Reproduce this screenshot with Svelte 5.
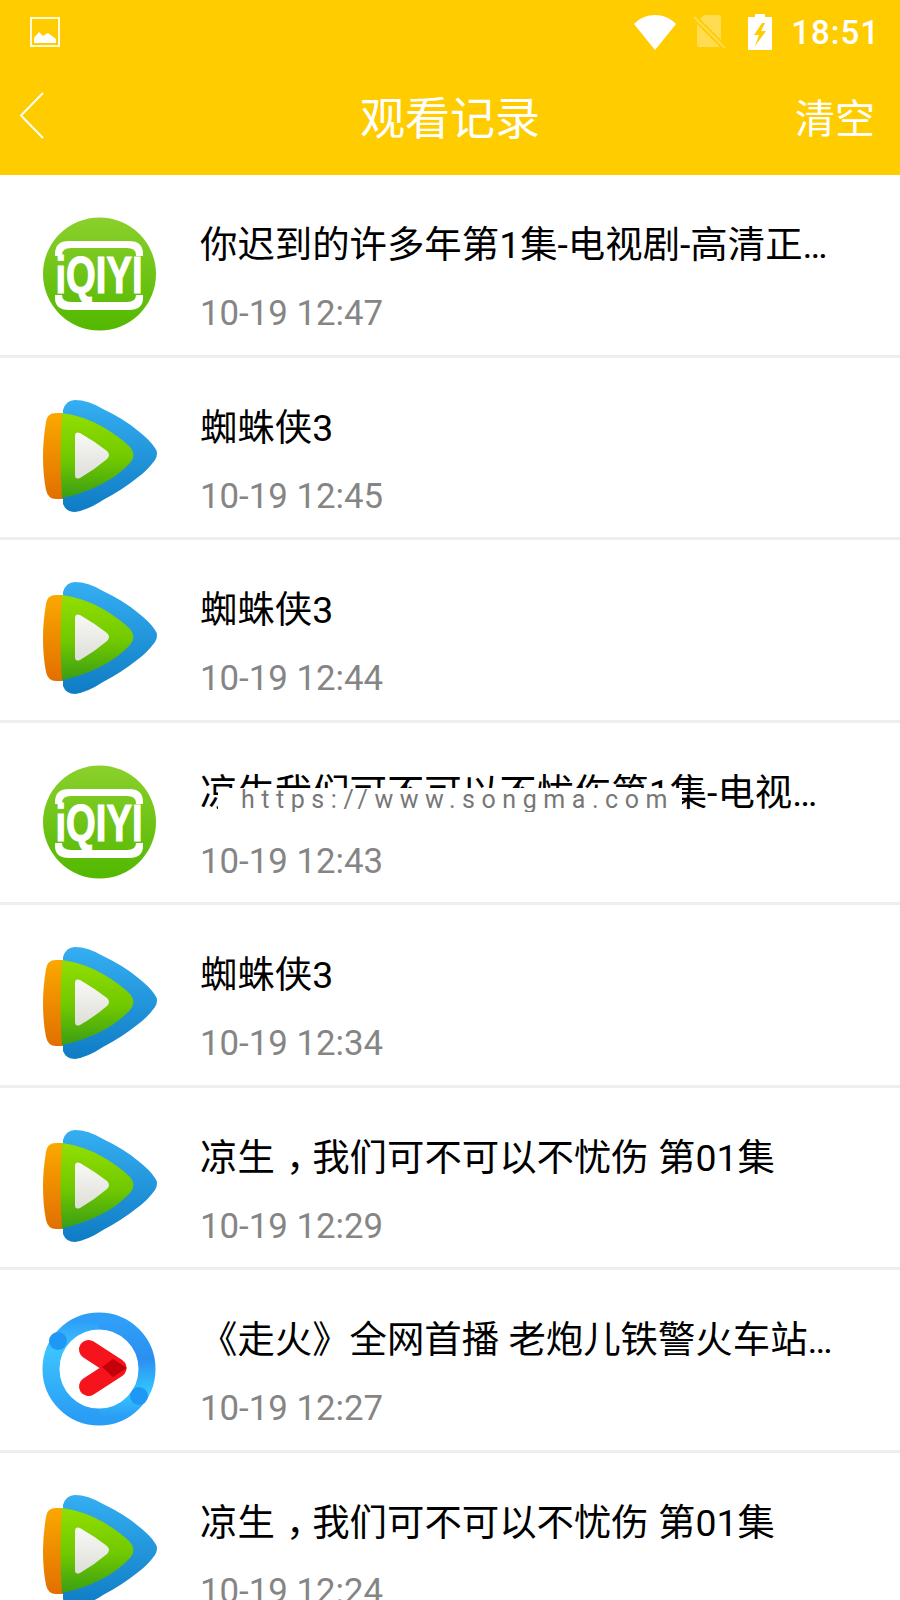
<script lang="ts">
  const records = [
    { app: "iqiyi", title: "你迟到的许多年第1集-电视剧-高清正版视频", time: "10-19 12:47" },
    { app: "tencent", title: "蜘蛛侠3", time: "10-19 12:45" },
    { app: "tencent", title: "蜘蛛侠3", time: "10-19 12:44" },
    { app: "iqiyi", title: "凉生我们可不可以不忧伤第1集-电视剧-高清正版", time: "10-19 12:43" },
    { app: "tencent", title: "蜘蛛侠3", time: "10-19 12:34" },
    { app: "tencent", title: "凉生，我们可不可以不忧伤 第01集", time: "10-19 12:29" },
    { app: "youku", title: "《走火》全网首播 老炮儿铁警火车站遭遇战", time: "10-19 12:27" },
    { app: "tencent", title: "凉生，我们可不可以不忧伤 第01集", time: "10-19 12:24" },
  ];
</script>

<div class="page">
  <header>
    <div class="status">
      <svg class="pic" width="32" height="32" viewBox="0 0 32 32">
        <rect x="2" y="2" width="28" height="28" fill="none" stroke="#fff" stroke-width="2" opacity=".85" />
        <path d="M5 27V22L10 16L14 20L19 17L27 23V27Z" fill="#fff" />
      </svg>
      <div class="status-right">
        <svg class="wifi" width="44" height="36" viewBox="0 0 46 36" preserveAspectRatio="none">
          <path d="M1 10C13 -2 33 -2 45 10L23 36Z" fill="#fff" />
        </svg>
        <svg class="sim" width="34" height="34" viewBox="0 0 34 34">
          <path d="M4 9V30a2 2 0 0 0 2 2H27Z M11 0H25a3 3 0 0 1 3 3V25L7 4Z" fill="#fff" opacity=".32" />
          <path d="M1 2L32 33" stroke="#fff" stroke-width="2" opacity=".32" />
        </svg>
        <svg class="batt" width="24" height="36" viewBox="0 0 24 36">
          <path fill-rule="evenodd" d="M7 0H17V3H24V36H0V3H7ZM14 9L6 21H11L7 32L18 17H13L17 9Z" fill="#fff" />
        </svg>
        <span class="clock">18:51</span>
      </div>
    </div>
    <div class="bar">
      <svg class="back" width="30" height="50" viewBox="0 0 30 50">
        <path d="M25 2L3 24.500L25 47" fill="none" stroke="#fff" stroke-width="2" />
      </svg>
      <h1>观看记录</h1>
      <span class="clear">清空</span>
    </div>
  </header>

  <ul>
    {#each records as r}
      <li>
        <svg class="logo" width="116" height="116" viewBox="0 0 116 116">
          {#if r.app === "iqiyi"}
            <defs>
              <linearGradient id="iq" x1="0" y1="0" x2="0" y2="1">
                <stop offset="0" stop-color="#8bd02c" />
                <stop offset="1" stop-color="#52b800" />
              </linearGradient>
            </defs>
            <circle cx="57.500" cy="57" r="56.500" fill="url(#iq)" />
            <path d="M13 39V37Q13 24 27 24H87Q101 24 101 37V39H94V38Q94 31 85 31H29Q20 31 20 38V39Z" fill="#fff" />
            <path d="M13 78V81Q13 93 27 93H87Q101 93 101 81V78H94V78Q94 85 85 85H29Q20 85 20 78V78Z" fill="#fff" />
            <text x="57" y="76" text-anchor="middle" textLength="87" lengthAdjust="spacingAndGlyphs" class="iq-text">iQIYI</text>
          {:else if r.app === "tencent"}
            <defs>
              <linearGradient id="tb" x1="0" y1="0" x2="0" y2="1">
                <stop offset="0" stop-color="#35aef2" />
                <stop offset="1" stop-color="#0f7cc4" />
              </linearGradient>
              <linearGradient id="to" x1="0" y1="0" x2="0" y2="1">
                <stop offset="0" stop-color="#fba800" />
                <stop offset="1" stop-color="#e26f00" />
              </linearGradient>
              <linearGradient id="tg" x1="0" y1="0" x2="0" y2="1">
                <stop offset="0" stop-color="#92de00" />
                <stop offset=".55" stop-color="#70c800" />
                <stop offset="1" stop-color="#3a9e14" />
              </linearGradient>
              <linearGradient id="tw" x1="0" y1="0" x2="0" y2="1">
                <stop offset="0" stop-color="#f8f8f6" />
                <stop offset="1" stop-color="#dedfd8" />
              </linearGradient>
            </defs>
            <path d="M21 10Q24 0 33 0Q46 0 61 9Q82 19 95 30Q108 40 113 48Q117 53 113 60Q105 71 95 78Q80 90 61 100Q46 110 33 112Q24 112 21 104Z" fill="url(#tb)" />
            <path d="M21 13H14Q5 13 4 22Q1 40 1 56Q1 75 4 90Q6 99 14 99H21Z" fill="url(#to)" />
            <path d="M20 13Q42 16 61 27Q78 37 88 47Q95 55 88 63Q76 76 58 85Q40 94 20 98Q17 56 20 13Z" fill="url(#tg)" />
            <path d="M33 36Q33 31 38 33Q52 41 65 51Q69 55 65 59Q52 70 38 78Q33 80 33 75Z" fill="url(#tw)" />
          {:else}
            <defs>
              <linearGradient id="ykl" x1="0" y1="0" x2="0" y2="1">
                <stop offset="0" stop-color="#2f9ff8" />
                <stop offset=".3" stop-color="#3cc4ff" />
                <stop offset="1" stop-color="#2a9df5" />
              </linearGradient>
              <linearGradient id="ykr" x1="0" y1="0" x2="0" y2="1">
                <stop offset="0" stop-color="#2f9ff8" />
                <stop offset=".4" stop-color="#2a90f0" />
                <stop offset=".75" stop-color="#35c8ff" />
                <stop offset="1" stop-color="#2a9df5" />
              </linearGradient>
            </defs>
            <path d="M57 9A48 48 0 0 0 57 105" fill="none" stroke="url(#ykl)" stroke-width="17" />
            <path d="M57 9A48 48 0 0 1 57 105" fill="none" stroke="url(#ykr)" stroke-width="17" />
            <circle cx="16" cy="29" r="9" fill="#1f97f5" />
            <circle cx="97" cy="84" r="9" fill="#1f97f5" />
            <path d="M46.500 37.500L75 56L46.500 74.500" fill="none" stroke="#f5141c" stroke-width="19" stroke-linecap="round" stroke-linejoin="round" />
            <path d="M60 55L71 47L85 56L71 65Z" fill="#c4000a" />
          {/if}
        </svg>
        <div class="info">
          <p class="title">
            {#each r.title.split("，") as part, i}
              {#if i > 0}<span class="comma">，</span>{/if}{part}
            {/each}
          </p>
          <p class="time">{r.time}</p>
        </div>
      </li>
    {/each}
  </ul>

  <div class="mark">https://www.songma.com</div>
</div>

<style>
  :global(body) {
    margin: 0;
    background: #fff;
  }

  .page {
    position: relative;
    width: 900px;
    height: 1600px;
    overflow: hidden;
    font-family: Roboto, "Noto Sans CJK SC", sans-serif;
  }

  header {
    height: 175px;
    background: #ffcc00;
    color: #fff;
  }

  .status {
    height: 64px;
    display: flex;
    align-items: center;
    justify-content: space-between;
    padding: 0 20px 0 29px;
  }

  .status-right {
    display: flex;
    align-items: center;
  }

  .sim {
    margin: 0 21px 0 16px;
  }

  .clock {
    margin-left: 19px;
    font-size: 33px;
    font-weight: 500;
    letter-spacing: 1px;
  }

  .bar {
    height: 103px;
    display: flex;
    align-items: center;
    justify-content: space-between;
    padding: 0 25px 0 18px;
    position: relative;
  }

  h1 {
    position: absolute;
    left: 0;
    right: 0;
    margin: 0;
    text-align: center;
    font-size: 45px;
    font-weight: 400;
  }

  .clear {
    font-size: 40px;
  }

  ul {
    list-style: none;
    margin: 0;
    padding: 0;
  }

  li {
    height: 179.500px;
    border-bottom: 3px solid #eeeeee;
    display: flex;
    align-items: flex-start;
    padding-left: 42px;
    gap: 42px;
  }

  .logo {
    flex: none;
    margin-top: 42px;
  }

  .info {
    width: 642px;
    padding-top: 47px;
  }

  .title {
    margin: 0 0 23px;
    font-size: 37.400px;
    line-height: 46px;
    color: #000;
    white-space: nowrap;
    overflow: hidden;
    text-overflow: ellipsis;
  }

  .comma {
    position: relative;
    left: 0.3em;
  }

  .time {
    margin: 0;
    font-size: 34.800px;
    line-height: 44px;
    color: #858585;
  }

  .iq-text {
    font-family: "Liberation Sans", sans-serif;
    font-weight: 700;
    font-size: 52px;
    fill: #fff;
    stroke: #fff;
    stroke-width: 1.200px;
  }

  .mark {
    position: absolute;
    left: 218px;
    top: 788px;
    height: 24px;
    padding: 0 8px 0 23px;
    line-height: 24px;
    background: #fff;
    color: #777;
    font-size: 25px;
    letter-spacing: 6.550px;
    overflow: hidden;
    white-space: nowrap;
  }
</style>
